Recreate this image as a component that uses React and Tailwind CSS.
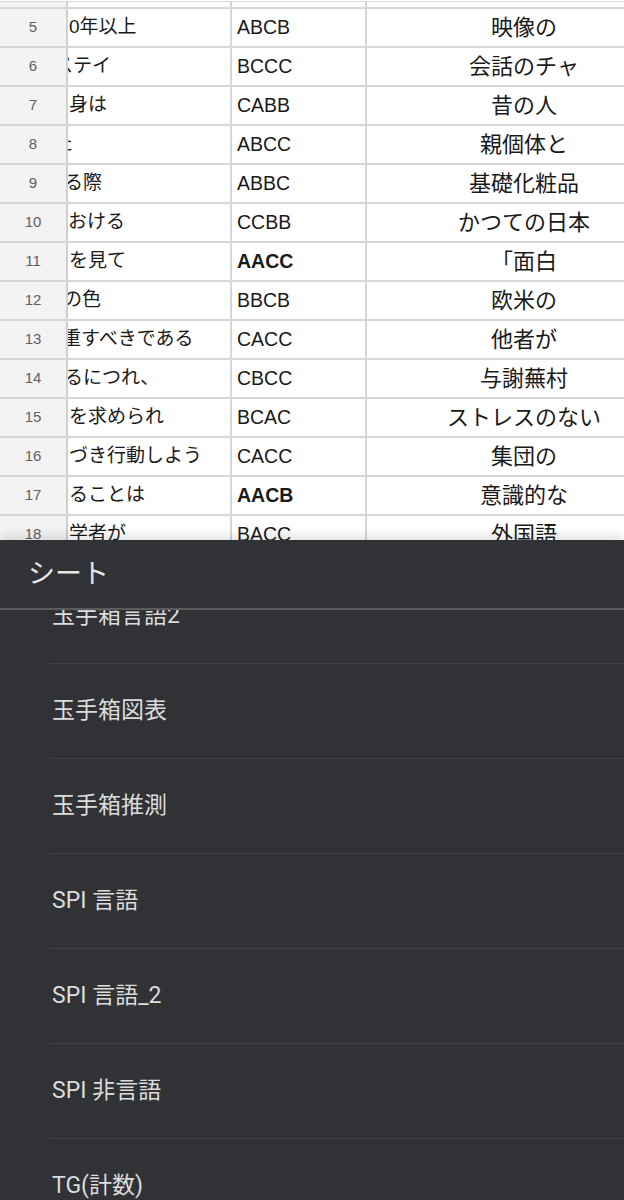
import React from 'react';

// 表示中の行（A列は横スクロールで左端が切れている）
const rows = [
  { n: 5, a: '0年以上', shift: 0, b: 'ABCB', c: '映像の' },
  { n: 6, a: 'ステイ', shift: -15, b: 'BCCC', c: '会話のチャ' },
  { n: 7, a: '身は', shift: 0, b: 'CABB', c: '昔の人' },
  { n: 8, a: 'た', shift: -15, b: 'ABCC', c: '親個体と' },
  { n: 9, a: 'る際', shift: -5, b: 'ABBC', c: '基礎化粧品' },
  { n: 10, a: 'おける', shift: -1, b: 'CCBB', c: 'かつての日本' },
  { n: 11, a: 'を見て', shift: 0, b: 'AACC', bold: true, c: '「面白' },
  { n: 12, a: 'の色', shift: -6, b: 'BBCB', c: '欧米の' },
  { n: 13, a: '重すべきである', shift: -7, b: 'CACC', c: '他者が' },
  { n: 14, a: 'るにつれ、', shift: -5, b: 'CBCC', c: '与謝蕪村' },
  { n: 15, a: 'を求められ', shift: 0, b: 'BCAC', c: 'ストレスのない' },
  { n: 16, a: 'づき行動しよう', shift: 0, b: 'CACC', c: '集団の' },
  { n: 17, a: 'ることは', shift: 0, b: 'AACB', bold: true, c: '意識的な' },
  { n: 18, a: '学者が', shift: 0, b: 'BACC', c: '外国語' },
];

const sheets = ['玉手箱言語2', '玉手箱図表', '玉手箱推測', 'SPI 言語', 'SPI 言語_2', 'SPI 非言語', 'TG(計数)'];

const sheetFont = { fontFamily: '"Liberation Sans", "Noto Sans CJK JP", sans-serif' };
const panelFont = { fontFamily: 'Roboto, "Noto Sans CJK JP", sans-serif' };

function Row({ row }) {
  return (
    <div className="flex h-[39px] border-b-2 border-[#d6d6d6]">
      <div className="w-[68px] shrink-0 bg-[#f3f3f3] border-r-2 border-[#cfcfcf] flex items-center justify-center text-[15px] text-[#5f5f5f]">
        {row.n}
      </div>
      <div className="w-[164px] shrink-0 border-r-2 border-[#d6d6d6] overflow-hidden flex items-center pl-[1px]">
        <span className="whitespace-nowrap text-[19px] text-[#1a1a1a]" style={{ marginLeft: row.shift }}>
          {row.a}
        </span>
      </div>
      <div className="w-[135px] shrink-0 border-r-2 border-[#d6d6d6] flex items-center pl-[5px]">
        <span className={`text-[19.5px] text-[#1a1a1a] ${row.bold ? 'font-bold' : ''}`}>{row.b}</span>
      </div>
      <div className="w-[314px] shrink-0 flex items-center justify-center">
        <span className="whitespace-nowrap text-[22px] text-[#1a1a1a]">{row.c}</span>
      </div>
    </div>
  );
}

export default function App() {
  return (
    <div className="w-[624px] h-[1200px] overflow-hidden flex flex-col bg-white">
      {/* スプレッドシート */}
      <div className="h-[540px] shrink-0 overflow-hidden" style={sheetFont}>
        <div className="mt-[1px] h-[8px] border-t border-b-2 border-[#d6d6d6] flex">
          <div className="w-[68px] shrink-0 bg-[#f3f3f3] border-r-2 border-[#cfcfcf]" />
          <div className="w-[164px] shrink-0 border-r-2 border-[#d6d6d6]" />
          <div className="w-[135px] shrink-0 border-r-2 border-[#d6d6d6]" />
        </div>
        {rows.map((r) => (
          <Row key={r.n} row={r} />
        ))}
      </div>

      {/* シート一覧パネル */}
      <div className="flex-1 flex flex-col bg-[#313236] shadow-[0_-4px_10px_rgba(0,0,0,0.12)] min-h-0" style={panelFont}>
        <div className="h-[70px] shrink-0 flex items-center pl-[28px] border-b-2 border-[#5b5c60]">
          <span className="text-[27px] text-[#e6e6e6]">シート</span>
        </div>
        <div className="flex-1 overflow-hidden">
          <div className="-mt-[41px]">
            {sheets.map((s) => (
              <div key={s} className="h-[95px] ml-[50px] flex items-center border-b border-[#3f4044]">
                <span className="pl-[2px] text-[23px] text-[#dcdcdc] whitespace-pre">{s}</span>
              </div>
            ))}
          </div>
        </div>
      </div>
    </div>
  );
}
